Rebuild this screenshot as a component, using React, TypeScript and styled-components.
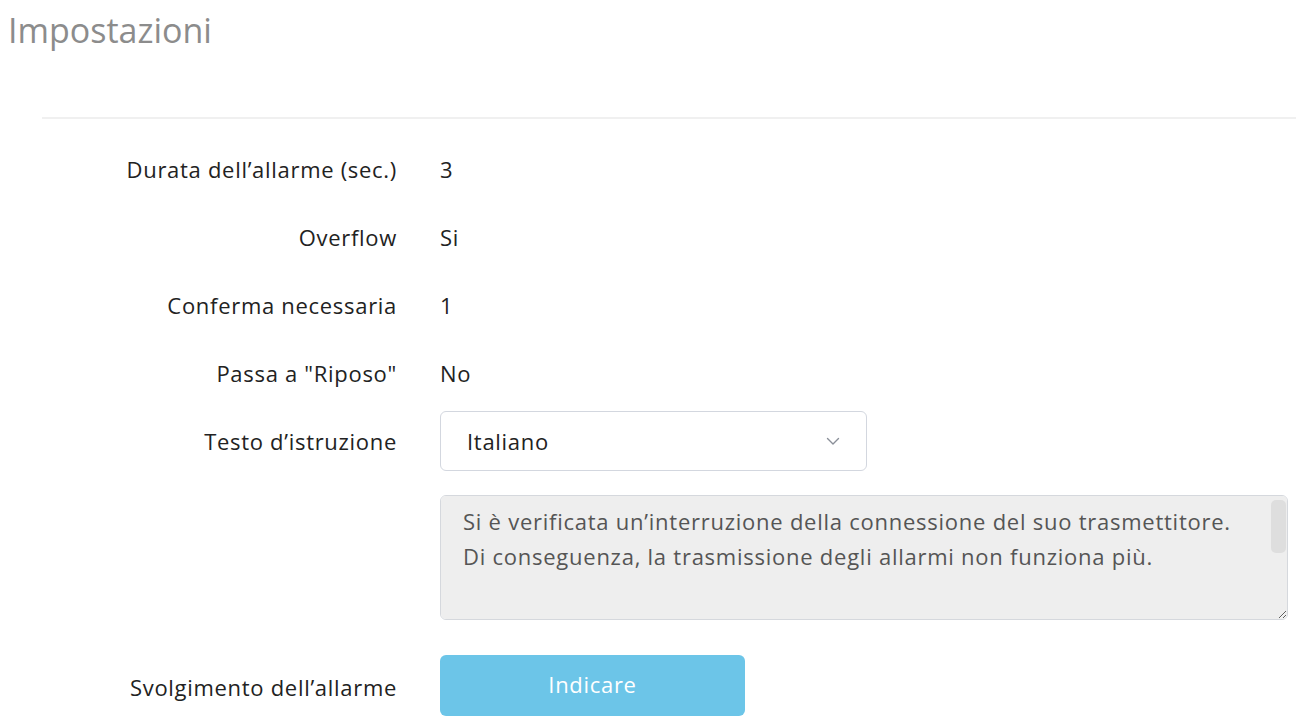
import React from "react";
import styled, { createGlobalStyle } from "styled-components";

const Global = createGlobalStyle`
  html, body { margin: 0; padding: 0; background: #fff; }
  body { font-family: "Open Sans", "Noto Sans", sans-serif; color: #222; }
  * { box-sizing: border-box; }
`;

const Page = styled.div`
  width: 1296px;
  height: 724px;
  overflow: hidden;
`;

const Title = styled.h1`
  margin: 0;
  padding: 8px 0 0 8px;
  height: 117px;
  font-size: 34px;
  font-weight: 400;
  line-height: 44px;
  color: #8c8c8c;
`;

const Section = styled.section`
  margin-left: 42px;
  border-top: 2px solid #f0f0f0;
  padding-top: 16px;
`;

const Form = styled.div`
  display: grid;
  grid-template-columns: 355px 1fr;
  column-gap: 43px;
  align-items: center;
`;

const Label = styled.div`
  height: 68px;
  display: flex;
  align-items: center;
  justify-content: flex-end;
  font-size: 22px;
  letter-spacing: 0.7px;
  color: #222;
  white-space: nowrap;
`;

const Value = styled.div`
  height: 68px;
  display: flex;
  align-items: center;
  font-size: 22px;
  letter-spacing: 0.7px;
  color: #222;
`;

const Select = styled.div`
  width: 427px;
  height: 60px;
  border: 1px solid #d3d7df;
  border-radius: 6px;
  display: flex;
  align-items: center;
  justify-content: space-between;
  padding: 0 26px 0 26px;
  font-size: 22px;
  letter-spacing: 0.7px;
  color: #222;
  background: #fff;
`;

const Spacer = styled.div``;

const TextAreaWrap = styled.div`
  position: relative;
  margin-top: 20px;
  margin-right: 8px;
`;

const TextArea = styled.textarea`
  display: block;
  width: 100%;
  height: 125px;
  margin: 0;
  padding: 8px 18px 0 22px;
  border: 1px solid #d5d8dd;
  border-radius: 6px;
  background: #eeeeee;
  color: #555;
  font-family: "Open Sans", "Noto Sans", sans-serif;
  font-size: 22px;
  letter-spacing: 0.75px;
  line-height: 35px;
  resize: vertical;
  outline: none;
  overflow-y: scroll;
  &::-webkit-scrollbar { width: 18px; }
  &::-webkit-scrollbar-track { background: transparent; }
  &::-webkit-scrollbar-thumb {
    background: #dedede;
    border-radius: 6px;
    border: 2px solid #eee;
  }
`;

const ScrollThumb = styled.div`
  position: absolute;
  top: 5px;
  right: 2px;
  width: 15px;
  height: 53px;
  border-radius: 5px;
  background: #dedede;
  pointer-events: none;
`;

const ButtonLabel = styled(Label)`
  margin-top: 35px;
  padding-bottom: 4px;
`;

const ButtonCell = styled.div`
  margin-top: 35px;
  height: 68px;
  display: flex;
  align-items: flex-start;
`;

const Button = styled.button`
  width: 305px;
  height: 61px;
  border: none;
  border-radius: 6px;
  background: #6cc5e8;
  color: #fff;
  font-family: "Open Sans", "Noto Sans", sans-serif;
  font-size: 22px;
  letter-spacing: 0.7px;
  cursor: pointer;
  padding: 0 0 4px;
`;

const Chevron = () => (
  <svg width="14" height="9" viewBox="0 0 14 9" fill="none">
    <path d="M1.5 1.5 L7 7 L12.5 1.5" stroke="#8a8f99" strokeWidth="1.4" strokeLinecap="round" strokeLinejoin="round" />
  </svg>
);

const text =
  "Si è verificata un’interruzione della connessione del suo trasmettitore.\nDi conseguenza, la trasmissione degli allarmi non funziona più.\n\nPer favore, contatti il suo fornitore di servizi il prima possibile.";

export default function App() {
  return (
    <Page>
      <Global />
      <Title>Impostazioni</Title>
      <Section>
        <Form>
          <Label>Durata dell’allarme (sec.)</Label>
          <Value>3</Value>
          <Label>Overflow</Label>
          <Value>Si</Value>
          <Label>Conferma necessaria</Label>
          <Value>1</Value>
          <Label>Passa a "Riposo"</Label>
          <Value>No</Value>
          <Label>Testo d’istruzione</Label>
          <Value>
            <Select>
              <span>Italiano</span>
              <Chevron />
            </Select>
          </Value>
          <Spacer />
          <TextAreaWrap>
            <TextArea readOnly value={text} />
            <ScrollThumb />
          </TextAreaWrap>
          <ButtonLabel>Svolgimento dell’allarme</ButtonLabel>
          <ButtonCell>
            <Button>Indicare</Button>
          </ButtonCell>
        </Form>
      </Section>
    </Page>
  );
}
